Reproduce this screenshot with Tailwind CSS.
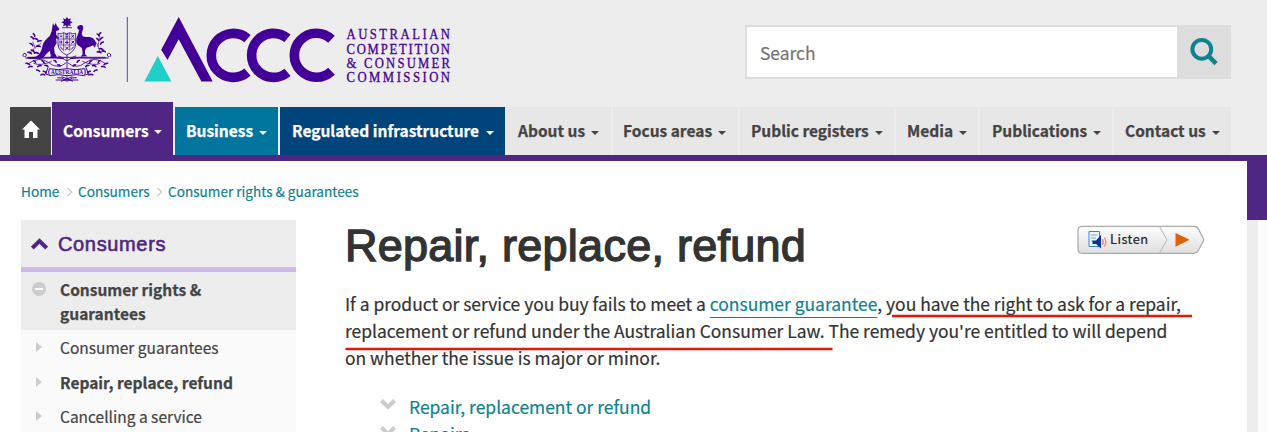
<!DOCTYPE html>
<html lang="en">

<head>
    <meta charset="UTF-8">
    <meta name="viewport" content="width=device-width, initial-scale=1.0">
    <title>Repair, replace, refund | ACCC</title>
    <script src="https://cdn.jsdelivr.net/npm/@tailwindcss/browser@4"></script>
</head>

<body class="relative w-[1267px] h-[432px] overflow-hidden bg-white text-[#333] font-['Noto_Sans_CJK_SC','Noto_Sans',sans-serif]">
    <header class="bg-[#ededed] h-[155px] flex flex-col justify-between">
        <div class="flex justify-between pl-5 pr-9 pt-[15px]">
            <a href="#" class="flex">
                <!-- coat of arms -->
                <svg class="w-[95px] h-[70px]" viewBox="60 45 285 210" fill="#430098" stroke="none">
                    <path d="M201 50l4 8 8-3-3 8 8 4-8 4 3 8-8-3-4 8-4-8-8 3 3-8-8-4 8-4-3-8 8 3z" />
                    <path d="M187 83h28" stroke="#430098" stroke-width="4" stroke-dasharray="4 2" />
                    <path d="M159 69l4 8 4-8 4 9 7 8-2 5-8 2 1 12 7 8 0 5-8-3 2 14-8 14 2 16 6 10-1 4h-20l4-5-4-16-8 8-10 12-8 4H83l1-4 22-2c12-4 18-16 21-30 3-16 14-24 22-32l6-14z" />
                    <path d="M231 84c2-9 14-13 18-5 3 9-5 16-3 25 2 8 11 6 21 7 12 1 21 9 21 22l-3 10-6-7-10 4-9 3-5 8v12l7 6-20 1 6-8-2-17-8-7c-10-5-11-14-8-25 3-10 7-16 7-23z" />
                    <g fill="none" stroke="#430098">
                        <path d="M174 100q10 4 17-2 9 7 18 0 9 6 18 2v34q-3 21-27 31-23-10-26-31z" stroke-width="2.5" />
                        <path d="M174 117h54M174 135h54M191 99v54M209 99v54" stroke-width="2" />
                        <path d="M180 106l6 6m0-6l-6 6M196 104h9m-9 5h9m-9 5h9M214 105l8 8m0-8l-8 8M180 122v9m5-9v9M195 127h11m-5-6v11M214 122l9 9m0-9l-9 9M181 140l7 9M213 149l8-9M196 140l10 10m0-10l-10 10" stroke-width="3" />
                        <path d="M70 170c-5-10 8-14 9-5-1 7-6 6-5 3m2 6c42 3 80-3 115 2M331 170c5-10-8-14-9-5 1 7 6 6 5 3m-2 6c-42 3-80-3-115 2M82 172h235" stroke-width="3" />
                        <path d="M201 165v80M201 182c-12-3-15-14-28-14M201 182c12-3 15-14 28-14M199 188q-25 22-53 0t-64 5M203 188q25 22 53 0t64 5M155 184q-34 15-54 6M247 184q34 15 54 6" stroke-width="2.5" />
                        <path d="M94 157c8-15 18-21 30-27M106 145l-8-20M300 157c-4-18-8-26-17-34M293 141l7-32" stroke-width="2" />
                        <path d="M144 202l-7 20 9 3M258 202l7 20-9 3M172 233q14-3 27 10M230 233q-14-3-27 10M167 240h68M183 244l34-14M219 244l-34-14" stroke-width="3" />
                    </g>
                    <!-- scroll -->
                    <path d="M148 206q-4 10 0 21 27-6 53 0 28-6 53 0 4-11 0-21-25 6-53 0-26 6-53 0z" fill="#ededed" stroke="#430098" stroke-width="3" />
                    <!-- wattle sprays either side -->
                    <path d="M92 150q10-2 11 8M82 158q10-6 13 5M88 130q9-1 11 9M98 100q8 3 6 11M91 110q9 0 10 9M102 116q9-3 13 6M112 126q6-6 14-3M108 140q9-6 14 1M101 160q10-7 16 2M304 97q-8 3-7 12M290 101q7 2 8 9M310 112q-8 0-10 9M288 115q7 0 8 8M312 126q-8-1-11 8M296 147q8-5 14 3M304 154q8-5 13 3M290 157q9-7 14 3" stroke="#430098" stroke-width="4" />
                    <path d="M76 190q8-3 14 5M84 203q7-8 14-2M99 181q8 2 8 9M112 201q6-8 13-3M108 210q9-2 12 6M124 181q9 2 9 10M128 214q8-2 11 6M121 226q8-7 15 0M133 197q8-4 12 4M325 190q-8-3-14 5M317 203q-7-8-14-2M302 181q-8 2-8 9M289 201q-6-8-13-3M293 210q-9-2-12 6M277 181q-9 2-9 10M273 214q-8-2-11 6M280 226q-8-7-15 0M268 197q-8-4-12 4M160 181q8-1 9 8M240 181q-8-1-9 8M171 195q8-3 10 5M229 195q-8-3-10 5" stroke="#430098" stroke-width="4" />
                    <text x="152" y="223" font-size="18" font-weight="700" textLength="98" lengthAdjust="spacingAndGlyphs" font-family="Liberation Serif, serif">AUSTRALIA</text>
                </svg>
                <!-- ACCC mark -->
                <svg class="w-[340px] h-[70px]" viewBox="115 15 340 70">
                    <path d="M127.3 17v65" stroke="#6c3aac" stroke-width="1" />
                    <path d="M157.8 56l13.6 25.4h-27z" fill="#1fd0c8" />
                    <path d="M178.7 17l34 64.5h-11.3L178.7 39.3l-11.2 20.8-6.3-10.4z" fill="#430098" />
                    <g fill="none" stroke="#430098" stroke-width="9.6">
                        <path d="M247.5 38.6A22 22 0 1 0 247.5 72.2" />
                        <path d="M287.5 38.3A22 22 0 1 0 287.5 72.4" />
                        <path d="M331.5 39.3A22 22 0 1 0 331.5 71.2" />
                    </g>
                    <g fill="#430098" stroke="#430098" stroke-width=".3" font-family="Liberation Serif, serif" font-size="13.8" transform="translate(346.500 0) scale(.92 1)">
                        <text x="0" y="39.5" textLength="112.5">AUSTRALIAN</text>
                        <text x="0" y="53.6" textLength="112.5">COMPETITION</text>
                        <text x="0" y="67.7" textLength="112.5">&amp; CONSUMER</text>
                        <text x="0" y="81.8" textLength="112.5">COMMISSION</text>
                    </g>
                </svg>
            </a>
            <form class="flex mt-[10px] w-[486px] h-[54px] border-2 border-[#ddd] bg-[#ddd]">
                <div class="w-[430px] bg-white pl-[13px] text-[17.4px] leading-[51px] text-[#757575] [-webkit-text-stroke:0.2px_#757575]">Search</div>
                <button type="button" class="flex-1 flex items-center justify-center pl-[2px]">
                    <svg class="w-[30px] h-[30px]" viewBox="0 0 30 30" fill="none" stroke="#0f8291">
                        <circle cx="12.8" cy="12.3" r="9.4" stroke-width="4" />
                        <path d="M19.5 19l7.6 7.7" stroke-width="4.6" />
                    </svg>
                </button>
            </form>
        </div>

        <nav class="flex items-end pl-[10px] text-[15.5px] font-bold text-[#444] whitespace-nowrap">
            <a href="#" class="w-[41px] h-12 mr-px bg-[#444] flex justify-center pt-[13px]">
                <svg class="w-[18px] h-[18px]" viewBox="0 0 18 18" fill="#fff">
                    <path d="M9 .5l9 9H15.500V18H11v-6H7v6H2.500V9.500H0z" />
                </svg>
            </a>
            <a href="#" class="w-[121px] h-[53px] mr-[2px] pl-[11px] pt-[4px] bg-[#4f2683] text-white flex items-center gap-[6px] [-webkit-text-stroke:0.25px_#fff]"><span class="w-[85px]">Consumers</span><i class="border-x-4 border-t-4 border-x-transparent border-t-white mt-[3px]"></i></a>
            <a href="#" class="w-[103px] h-12 mr-[2px] pl-[11px] pb-px bg-[#00759e] text-white flex items-center gap-[6px] [-webkit-text-stroke:0.25px_#fff]"><span class="w-[67px]">Business</span><i class="border-x-4 border-t-4 border-x-transparent border-t-white mt-1"></i></a>
            <a href="#" class="w-[225px] h-12 pl-[12px] pb-px bg-[#00447c] text-white flex items-center gap-[6px] [-webkit-text-stroke:0.25px_#fff]"><span class="w-[188px]">Regulated infrastructure</span><i class="border-x-4 border-t-4 border-x-transparent border-t-white mt-1"></i></a>
            <a href="#" class="w-[106px] h-12 mr-[2px] pl-[13px] pb-px bg-[#e7e7e7] flex items-center gap-[6px] [-webkit-text-stroke:0.25px_#444]"><span class="w-[67px]">About us</span><i class="border-x-4 border-t-4 border-x-transparent border-t-[#444] mt-1"></i></a>
            <a href="#" class="w-[125px] h-12 mr-[2px] pl-[10px] pb-px bg-[#e7e7e7] flex items-center gap-[6px] [-webkit-text-stroke:0.25px_#444]"><span class="w-[89px]">Focus areas</span><i class="border-x-4 border-t-4 border-x-transparent border-t-[#444] mt-1"></i></a>
            <a href="#" class="w-[154px] h-12 mr-[2px] pl-[11px] pb-px bg-[#e7e7e7] flex items-center gap-[6px] [-webkit-text-stroke:0.25px_#444]"><span class="w-[118px]">Public registers</span><i class="border-x-4 border-t-4 border-x-transparent border-t-[#444] mt-1"></i></a>
            <a href="#" class="w-[82px] h-12 mr-[2px] pl-[11px] pb-px bg-[#e7e7e7] flex items-center gap-[6px] [-webkit-text-stroke:0.25px_#444]"><span class="w-[46px]">Media</span><i class="border-x-4 border-t-4 border-x-transparent border-t-[#444] mt-1"></i></a>
            <a href="#" class="w-[132px] h-12 mr-[2px] pl-[12px] pb-px bg-[#e7e7e7] flex items-center gap-[6px] [-webkit-text-stroke:0.25px_#444]"><span class="w-[95px]">Publications</span><i class="border-x-4 border-t-4 border-x-transparent border-t-[#444] mt-1"></i></a>
            <a href="#" class="w-[117px] h-12 pl-[11px] pb-px bg-[#e7e7e7] flex items-center gap-[6px] [-webkit-text-stroke:0.25px_#444]"><span class="w-[81px]">Contact us</span><i class="border-x-4 border-t-4 border-x-transparent border-t-[#444] mt-1"></i></a>
        </nav>
    </header>
    <div class="h-[6px] bg-[#4f2683]"></div>

    <div class="flex h-[271px]">
        <div class="w-[1247px] pl-[21px]">
            <div class="flex items-center h-[59px] pt-[2px] text-[13.6px] text-[#0f8291] whitespace-nowrap [-webkit-text-stroke:0.2px_#0f8291]">
                <a href="#" class="w-[38px]">Home</a>
                <svg class="w-[5px] h-[10px] ml-2 mr-[6px]" viewBox="0 0 5 10" fill="none" stroke="#ccc" stroke-width="1.3"><path d="M.5 1l4 4-4 4" /></svg>
                <a href="#" class="w-[71px]">Consumers</a>
                <svg class="w-[5px] h-[10px] ml-2 mr-[6px]" viewBox="0 0 5 10" fill="none" stroke="#ccc" stroke-width="1.3"><path d="M.5 1l4 4-4 4" /></svg>
                <a href="#">Consumer rights &amp; guarantees</a>
            </div>

            <div class="flex">
                <aside class="w-[275px] h-[212px] bg-[#fafafa] text-[#444] overflow-hidden">
                    <h2 class="flex items-center h-[52px] bg-[#ededed] border-b-[5px] border-[#cfb9ea] pl-[10px] gap-[10px] text-[20px] tracking-[0.65px] text-[#4f2683] font-['Liberation_Sans',sans-serif] [-webkit-text-stroke:0.6px_#4f2683]">
                        <svg class="w-[17px] h-[12px]" viewBox="0 0 17 12" fill="none" stroke="#4f2683" stroke-width="4"><path d="M1.300 10l7.200-7 7.200 7" /></svg>
                        <span>Consumers</span>
                    </h2>
                    <div class="flex h-[58px] bg-[#ededed] pl-[11px] pt-[5px] font-bold text-[15.5px] leading-6 [-webkit-text-stroke:0.25px_#444]">
                        <svg class="w-[14px] h-[14px] mt-[5px] mr-[14px]" viewBox="0 0 14 14"><circle cx="7" cy="7" r="7" fill="#ccc" /><path d="M3 7h8" stroke="#fff" stroke-width="2" /></svg>
                        <span>Consumer rights &amp;<br>guarantees</span>
                    </div>
                    <ul class="text-[15.5px] leading-6 pt-[5px]">
                        <li class="flex items-center pl-[15px] gap-[18px] h-6 mb-[11px] [-webkit-text-stroke:0.2px_#444]"><i class="border-y-5 border-l-6 border-y-transparent border-l-[#ccc]"></i>Consumer guarantees</li>
                        <li class="flex items-center pl-[15px] gap-[18px] h-6 mb-[10px] font-bold [-webkit-text-stroke:0.25px_#444]"><i class="border-y-5 border-l-6 border-y-transparent border-l-[#ccc]"></i>Repair, replace, refund</li>
                        <li class="flex items-center pl-[15px] gap-[18px] h-6 [-webkit-text-stroke:0.2px_#444]"><i class="border-y-5 border-l-6 border-y-transparent border-l-[#ccc]"></i>Cancelling a service</li>
                    </ul>
                </aside>

                <main class="ml-[49px] w-[860px] whitespace-nowrap">
                    <div class="flex justify-between">
                        <h1 class="text-[45px] leading-[52px] font-['Liberation_Sans',sans-serif] tracking-[0.25px] [-webkit-text-stroke:1.4px_#333]">Repair, replace, refund</h1>
                        <svg class="w-[128px] h-[30px] mt-1" viewBox="1077 224 128 30">
                            <defs>
                                <linearGradient id="btn" x1="0" y1="0" x2="0" y2="1">
                                    <stop offset="0" stop-color="#fdfdfd" />
                                    <stop offset="1" stop-color="#dfdfdf" />
                                </linearGradient>
                            </defs>
                            <path d="M1082 226.300h112q3 0 4.500 3l5 9.500q.6 1 0 2l-5 9.500q-1.500 3-4.500 3h-112q-4 0-4-4v-19q0-4 4-4z" fill="url(#btn)" stroke="#aaa" stroke-width="1.200" />
                            <path d="M1159.500 226.500l7.500 13.300-7.500 13.300" fill="none" stroke="#b5b5b5" />
                            <path d="M1175.500 233l14 6.800-14 7z" fill="#e25f05" />
                            <path d="M1089 231.500h10.500v15H1089z" fill="#eaf5fd" stroke="#3d85c6" />
                            <path d="M1091 235h6.500m-6.500 3h5m-5 3h2" stroke="#6aa5d8" />
                            <path d="M1092.500 240.500h3.500l5-5.500v13.500l-5-4.500h-3.500z" fill="#06329a" />
                            <path d="M1102.300 239q1.800 3 0 6M1104.400 237.500q2.800 4.500 0 9" fill="none" stroke="#f2857c" stroke-width="1.300" />
                            <text x="1110" y="244.300" font-size="12.800" textLength="38" fill="#222" stroke="#222" stroke-width=".2" font-family="Noto Sans CJK SC, sans-serif">Listen</text>
                        </svg>
                    </div>
                    <p class="mt-[18px] text-[17.45px] leading-[27px] [-webkit-text-stroke:0.2px]">If a product or service you buy fails to meet a <a href="#" class="text-[#0f8291] underline decoration-1 underline-offset-[6px] [text-decoration-skip-ink:none]">consumer guarantee</a>, you have the right to ask for a repair,<br>replacement or refund under the Australian Consumer Law. The remedy you're entitled to will depend<br>on whether the issue is major or minor.</p>
                    <ul class="mt-[22px] pl-[35px] text-[17.45px] leading-[27px] text-[#0f8291] [-webkit-text-stroke:0.2px_#0f8291]">
                        <li class="flex gap-[13px]"><svg class="w-4 h-[11px] mt-[6px]" viewBox="0 0 16 11" fill="none" stroke="#ccc" stroke-width="4"><path d="M1.500 1.500l6.500 6.500 6.500-6.500" /></svg>Repair, replacement or refund</li>
                        <li class="flex gap-[13px]"><svg class="w-4 h-[11px] mt-[6px]" viewBox="0 0 16 11" fill="none" stroke="#ccc" stroke-width="4"><path d="M1.500 1.500l6.500 6.500 6.500-6.500" /></svg>Repairs</li>
                    </ul>
                </main>
            </div>
        </div>
        <div class="w-5">
            <div class="h-[59px] bg-[#4f2683]"></div>
            <div class="h-[212px] bg-[#fafafa] border-l-[11px] border-[#ededed]"></div>
        </div>
    </div>

    <!-- red pen marks over the paragraph -->
    <svg class="absolute inset-0 w-full h-full" viewBox="0 0 1267 432" stroke="#e01b0b" stroke-width="2.400">
        <path d="M892 316h300M345.500 349h487" />
    </svg>
</body>

</html>
